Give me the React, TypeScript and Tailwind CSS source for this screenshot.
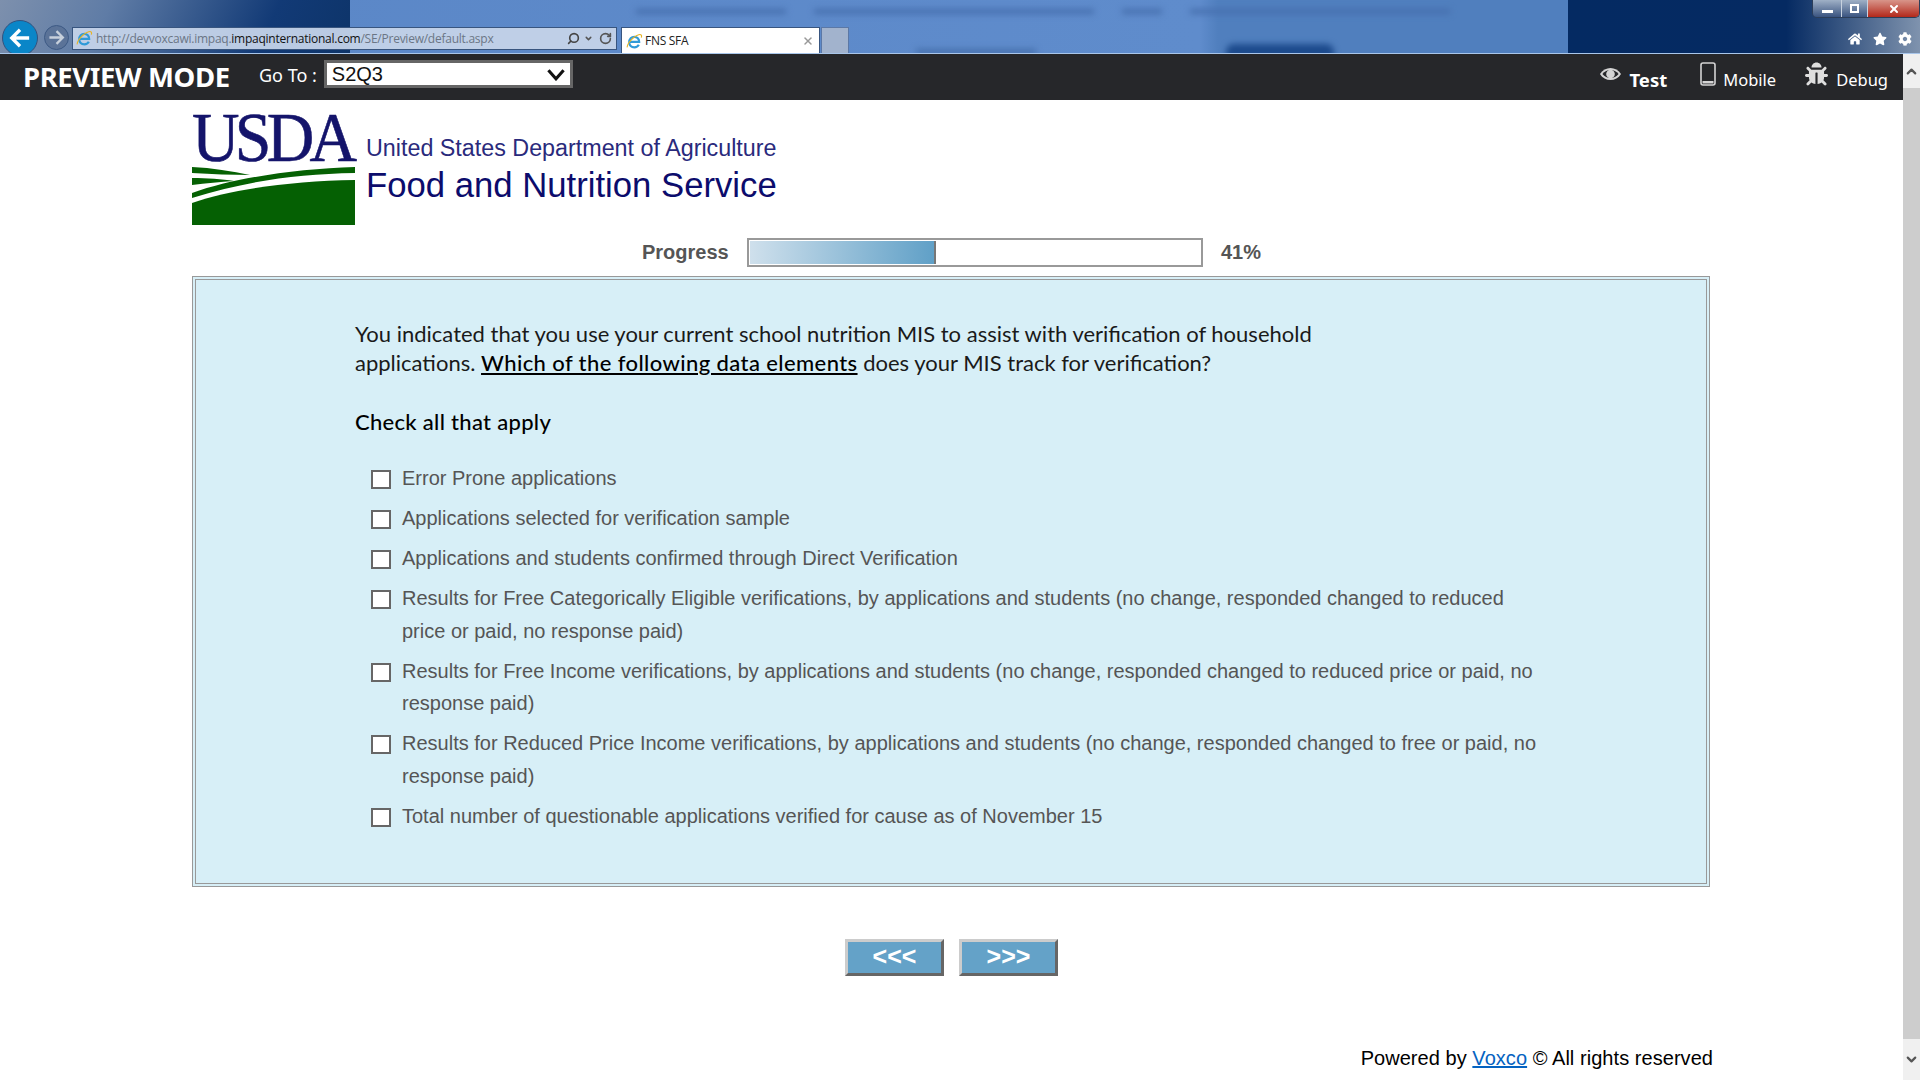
import { FaBug, FaHome, FaStar, FaCog } from "react-icons/fa";
import { ChevronDown, ChevronUp, RotateCw, Search, X } from "lucide-react";

const options = [
  "Error Prone applications",
  "Applications selected for verification sample",
  "Applications and students confirmed through Direct Verification",
  "Results for Free Categorically Eligible verifications, by applications and students (no change, responded changed to reduced price or paid, no response paid)",
  "Results for Free Income verifications, by applications and students (no change, responded changed to reduced price or paid, no response paid)",
  "Results for Reduced Price Income verifications, by applications and students (no change, responded changed to free or paid, no response paid)",
  "Total number of questionable applications verified for cause as of November 15",
];

function IeIcon() {
  return (
    <svg viewBox="0 0 20 20" className="h-[17px] w-[17px] shrink-0">
      <path d="M3 10.5h12.5c0-3.6-2.4-6-5.6-6-3.5 0-6.1 2.6-6.1 6.4 0 3.6 2.5 6 6 6 2.4 0 4.3-1.1 5.3-3" fill="none" stroke="#2f9ad8" strokeWidth="2.6" />
      <path d="M1.5 17C.5 13 9 3.5 15 2c3-.7 4 .8 3 3.5" fill="none" stroke="#e8b422" strokeWidth="1.3" />
    </svg>
  );
}

function BrowserChrome() {
  return (
    <div className="relative flex h-[54px] shrink-0 justify-between overflow-hidden border-b border-[#a9c6ea] [background:linear-gradient(115deg,#7d90ad_0%,#5f7ca6_30%,#123a76_75%,#0d3469_100%)_0_0/350px_100%_no-repeat,linear-gradient(90deg,#042a62_0%,#052a62_62%,#7f93ae_100%)_100%_0/352px_100%_no-repeat,linear-gradient(90deg,#1c4a8c_0px,#5a86c6_6px,#5f8ccc_1200px,#507fbe_1218px)]">
      {/* blurred page behind the glass */}
      <div className="absolute left-[636px] top-[9px] flex gap-[28px]">
        <div className="h-[5px] w-[150px] bg-[#466fae] blur-[3px]" />
        <div className="h-[5px] w-[280px] bg-[#466fae] blur-[3px]" />
        <div className="h-[5px] w-[40px] bg-[#466fae] blur-[3px]" />
        <div className="h-[5px] w-[260px] bg-[#466fae] blur-[3px]" />
      </div>
      <div className="absolute left-[1226px] top-[44px] h-[14px] w-[108px] rounded-t-lg bg-[#1c4a8c] blur-[3px]" />
      <div className="absolute left-[916px] top-[49px] h-[6px] w-[120px] bg-[#4670ad] blur-[3px]" />

      <div className="relative flex items-start pl-[2px] pt-[20px]">
        <div className="flex h-[36px] w-[36px] shrink-0 items-center justify-center rounded-full border border-[#34527e] bg-[#0a86c8]">
          <svg viewBox="0 0 24 24" className="h-[22px] w-[22px]" fill="none" stroke="#fff" strokeWidth="3.6">
            <path d="M22 12H4M12 3l-9 9 9 9" />
          </svg>
        </div>
        <div className="ml-[6px] mt-[5px] flex h-[25px] w-[25px] shrink-0 items-center justify-center rounded-full border border-[#3d5a85] bg-[#5b7398]">
          <svg viewBox="0 0 24 24" className="h-[17px] w-[17px]" fill="none" stroke="#c7d0dc" strokeWidth="3.2">
            <path d="M2 12h18M12 3l9 9-9 9" />
          </svg>
        </div>
        <div className="ml-[3px] mt-[7px] flex h-[23px] w-[545px] shrink-0 items-center gap-[3px] border border-[#38557f] bg-[#c4d3e9]/95 pl-[3px] pr-[4px] font-['Open_Sans',sans-serif] text-[12px] tracking-[-0.25px] text-[#6b7685]">
          <IeIcon />
          <span className="flex-1 whitespace-nowrap">
            http://devvoxcawi.impaq.<span className="text-[#111]">impaqinternational.com</span>/SE/Preview/default.aspx
          </span>
          <Search className="h-[13px] w-[13px] -scale-x-100 text-[#444]" strokeWidth={3} />
          <ChevronDown className="ml-[1px] h-[9px] w-[9px] text-[#555]" strokeWidth={4} />
          <RotateCw className="ml-[3px] h-[13px] w-[13px] text-[#555]" strokeWidth={3} />
        </div>
        <div className="ml-[4px] mt-[7px] flex h-[27px] w-[199px] shrink-0 items-center gap-[2px] border-x border-t border-[#38557f] bg-white pl-[4px] pr-[5px] font-['Open_Sans',sans-serif] text-[12px] tracking-[-0.3px] text-[#222]">
          <IeIcon />
          <span className="flex-1">FNS SFA</span>
          <X className="h-[12px] w-[12px] text-[#999]" strokeWidth={3} />
        </div>
        <div className="ml-[1px] mt-[7px] h-[27px] w-[28px] shrink-0 border-x border-t border-[#5b78a6] bg-[#a2b3cd]" />
      </div>

      <div className="relative flex flex-col items-end">
        <div className="flex h-[18px] w-[108px] overflow-hidden rounded-b-[5px] border-x border-b border-[#2c3e59] text-white">
          <div className="flex w-[29px] items-end justify-center border-r border-[#c8d2df] bg-[linear-gradient(#9fb0c6,#3a5480)] pb-[4px]">
            <div className="h-[3px] w-[11px] bg-white" />
          </div>
          <div className="flex w-[26px] items-center justify-center border-r border-[#c8d2df] bg-[linear-gradient(#9fb0c6,#3a5480)]">
            <div className="h-[9px] w-[9px] border-2 border-white" />
          </div>
          <div className="flex flex-1 items-center justify-center bg-[linear-gradient(#d8958a,#b3281a)]">
            <X className="h-[12px] w-[12px]" strokeWidth={4} />
          </div>
        </div>
        <div className="mt-[14px] flex items-center gap-[11px] pr-[8px] text-white">
          <FaHome className="h-[14px] w-[14px]" />
          <FaStar className="h-[14px] w-[14px]" />
          <FaCog className="h-[14px] w-[14px]" />
        </div>
      </div>
    </div>
  );
}

function PreviewBar() {
  return (
    <div className="flex h-[46px] shrink-0 items-center justify-between bg-[#26272a] font-['Noto_Sans',sans-serif] text-white">
      <div className="flex items-center">
        <span className="ml-[23px] w-[207px] whitespace-nowrap text-[27.5px] font-bold tracking-[-0.4px]">PREVIEW MODE</span>
        <span className="ml-[29px] -translate-y-[2px] whitespace-nowrap text-[18px] leading-none">Go To :</span>
        <div className="ml-[7px] flex h-[28px] w-[249px] -translate-y-[3px] items-center justify-between border-[3px] border-[#666] bg-white pl-[5px] pr-[5px] font-['Liberation_Sans',sans-serif] text-[20px] text-[#111]">
          S2Q3
          <svg viewBox="0 0 16 12" className="h-[13px] w-[18px]" fill="none" stroke="#111" strokeWidth="2.8">
            <path d="M1 2l7 8 7-8" />
          </svg>
        </div>
      </div>
      <div className="flex items-center pr-[15px]">
        <svg viewBox="0 0 24 16" className="mb-[7px] h-[16px] w-[23px]">
          <path d="M1 8c5-8.5 17-8.5 22 0-5 8.5-17 8.5-22 0z" fill="#d4d4d4" />
          <path d="M3.5 8c4.5-5.5 12.500-5.500 17 0-4.500 5.500-12.500 5.500-17 0z" fill="#26272a" />
          <circle cx="12" cy="8" r="4.500" fill="#d4d4d4" />
        </svg>
        <span className="ml-[7px] translate-y-[3px] text-[18.5px] font-bold">Test</span>
        <svg viewBox="0 0 16 24" className="mb-[6px] ml-[33px] h-[24px] w-[16px]" fill="none">
          <rect x="1" y="1" width="14" height="22" rx="2" stroke="#d4d4d4" strokeWidth="1.600" />
          <rect x="2.500" y="19" width="11" height="2.500" fill="#d4d4d4" />
        </svg>
        <span className="ml-[7px] translate-y-[3px] text-[16.5px]">Mobile</span>
        <FaBug className="mb-[6px] ml-[29px] h-[24px] w-[23px] text-[#dedede]" />
        <span className="ml-[8px] translate-y-[3px] text-[16.5px]">Debug</span>
      </div>
    </div>
  );
}

function Logo() {
  return (
    <div className="ml-[192px] flex pt-[9px]">
      <div className="w-[163px]">
        <div className="h-[58px] origin-left scale-x-[0.94] whitespace-nowrap font-['Liberation_Serif',serif] text-[70px] leading-[58px] tracking-[-5px] text-[#14146b] [-webkit-text-stroke:0.6px_#14146b]">USDA</div>
        <svg viewBox="0 0 163 58" className="block h-[58px] w-[163px]">
          <path d="M0 36C40 22 100 14 163 13V58H0z" fill="#056003" />
          <path d="M163 0V6C105 7 55 14 0 31V26C45 10 105 2 163 0z" fill="#056003" />
          <path d="M0 0C20 1 40 4 58 8 40 8 20 7 0 6z" fill="#056003" />
          <path d="M0 11C15 11 30 12 42 14 28 15 14 16 0 18z" fill="#056003" />
        </svg>
      </div>
      <div className="ml-[11px] whitespace-nowrap pt-[25px] font-['Liberation_Sans',sans-serif]">
        <div className="text-[23.3px] leading-[28px] text-[#2a2a7c]">United States Department of Agriculture</div>
        <div className="mt-[4px] text-[34.7px] leading-[38px] text-[#0c0c6c]">Food and Nutrition Service</div>
      </div>
    </div>
  );
}

function ProgressRow() {
  return (
    <div className="ml-[642px] mt-[13px] flex h-[29px] items-center font-['Liberation_Sans',sans-serif] text-[20px] font-bold text-[#555]">
      <span className="w-[105px] -translate-y-[1px]">Progress</span>
      <div className="h-[29px] w-[456px] border-[2px] border-[#999] p-[1px]">
        <div className="h-full w-[186px] border-r-2 border-[#777] bg-[linear-gradient(90deg,#cfe0ec,#60a0c7)]" />
      </div>
      <span className="ml-[18px] -translate-y-[1px]">41%</span>
    </div>
  );
}

function QuestionPanel() {
  return (
    <div className="ml-[192px] mt-[9px] h-[611px] w-[1518px] border-4 border-double border-[#999] bg-[#d7eff7] pl-[159px] pt-[39px]">
      <p className="w-[1000px] font-['Lato',sans-serif] text-[22px] leading-[29px] text-[#1a1a1a]">
        You indicated that you use your current school nutrition MIS to assist with verification of household applications.{" "}
        <span className="font-medium tracking-[0.4px] text-black underline">Which of the following data elements</span> does your MIS track for verification?
      </p>
      <p className="mt-[30px] font-['Lato',sans-serif] text-[22px] font-medium leading-[29px] tracking-[0.3px] text-black">Check all that apply</p>
      <div className="ml-[16px] mt-[26.25px] flex w-[1175px] flex-col gap-[7.5px] font-['Liberation_Sans',sans-serif] text-[20px] leading-[32.5px] text-[#555]">
        {options.map((label) => (
          <label key={label} className="flex items-start gap-[11px]">
            <input type="checkbox" className="mt-[8px] h-[19px] w-[20px] shrink-0 appearance-none border-[2px] border-[#666] bg-white" />
            <span>{label}</span>
          </label>
        ))}
      </div>
    </div>
  );
}

function NavButton({ label }: { label: string }) {
  return (
    <button className="h-[37px] w-[99px] border-[3px] border-b-[#666] border-l-[#ccc] border-r-[#666] border-t-[#ccc] bg-[#64a2c8] pb-[2px] font-['Liberation_Sans',sans-serif] text-[25px] font-bold leading-none text-white">
      {label}
    </button>
  );
}

function Scrollbar() {
  return (
    <div className="flex w-[17px] shrink-0 flex-col bg-[#f0f0f0]">
      <div className="flex h-[34px] items-center justify-center">
        <ChevronUp className="h-[15px] w-[15px] text-[#555]" strokeWidth={3.5} />
      </div>
      <div className="flex-1 bg-[#cdcdcd]" />
      <div className="flex h-[41px] items-center justify-center">
        <ChevronDown className="h-[15px] w-[15px] text-[#555]" strokeWidth={3.5} />
      </div>
    </div>
  );
}

export default function App() {
  return (
    <div className="flex h-screen w-full flex-col overflow-hidden bg-white">
      <BrowserChrome />
      <div className="flex min-h-0 flex-1">
        <div className="min-w-0 flex-1">
          <PreviewBar />
          <Logo />
          <ProgressRow />
          <QuestionPanel />
          <div className="ml-[845px] mt-[52px] flex gap-[15px]">
            <NavButton label="<<<" />
            <NavButton label=">>>" />
          </div>
          <p className="ml-[192px] mt-[71px] w-[1521px] text-right font-['Liberation_Sans',sans-serif] text-[20px] leading-[23px] tracking-[0.05px] text-black">
            Powered by <a className="text-[#0563c1] underline">Voxco</a> © All rights reserved
          </p>
        </div>
        <Scrollbar />
      </div>
    </div>
  );
}
